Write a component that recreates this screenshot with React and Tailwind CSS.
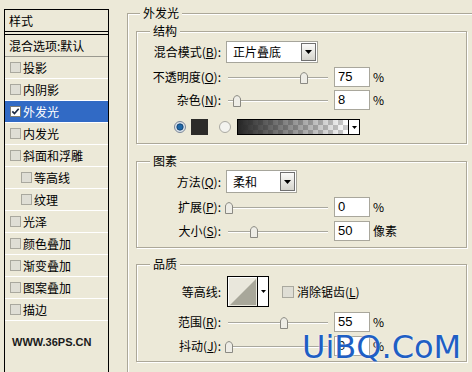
import React from 'react';

// 图层样式面板（左侧列表）
const layerStyles = [
  { name: '投影' },
  { name: '内阴影' },
  { name: '外发光', checked: true, active: true },
  { name: '内发光' },
  { name: '斜面和浮雕' },
  { name: '等高线', sub: true },
  { name: '纹理', sub: true },
  { name: '光泽' },
  { name: '颜色叠加' },
  { name: '渐变叠加' },
  { name: '图案叠加' },
  { name: '描边' },
];

function Box({ checked, size = 'w-[11px] h-[11px]' }) {
  return (
    <span
      className={`${size} shrink-0 border flex items-center justify-center ${
        checked ? 'border-[#7d7c75] bg-white' : 'border-[#a9a89e] bg-[#dfded5]'
      }`}
    >
      {checked && (
        <svg width="9" height="9" viewBox="0 0 9 9">
          <path d="M1.3 4.3L3.5 6.6L7.7 1.8" stroke="#1d2a44" strokeWidth="1.7" fill="none" />
        </svg>
      )}
    </span>
  );
}

function Tri({ w = 7, h = 4 }) {
  return (
    <svg width={w} height={h} viewBox={`0 0 ${w} ${h}`}>
      <path d={`M0 0H${w}L${w / 2} ${h}Z`} fill="#000" />
    </svg>
  );
}

function Select({ value, width }) {
  return (
    <div className={`${width} ml-[5px] bg-white border border-[#a6a59b] flex items-center shrink-0`}>
      <span className="pl-[6px]">{value}</span>
      <span className="ml-auto mr-[1px] w-[15px] h-[calc(100%-2px)] border border-[#707070] bg-[linear-gradient(#fbfbfa,#d5d4cc)] flex items-center justify-center">
        <Tri />
      </span>
    </div>
  );
}

function Slider({ pos }) {
  return (
    <div className="relative ml-[5px] w-[104px] h-[20px] shrink-0">
      <div className="absolute left-[2px] right-[2px] top-[10px] h-[2px] border-t border-t-[#a9a89e] border-b border-b-white" />
      <svg className="absolute top-[5px]" style={{ left: pos - 1 }} width="8" height="12" viewBox="0 0 8 12">
        <path d="M0.5 11.5V4Q0.5 2.4 2.2 1.3L4 0.5L5.8 1.3Q7.5 2.4 7.5 4V11.5Z" fill="#eeede6" stroke="#8a8982" />
      </svg>
    </div>
  );
}

function Field({ value, unit }) {
  return (
    <>
      <div className="ml-[4px] w-[36px] h-[20px] bg-white border border-[#a9a79c] pl-[3px] flex items-center text-[13px] font-['Liberation_Sans',sans-serif]">
        {value}
      </div>
      <span className="ml-[3px]">{unit}</span>
    </>
  );
}

function Label({ children }) {
  return <div className="w-[84px] shrink-0 text-right whitespace-nowrap">{children}</div>;
}

function SliderRow({ label, pos, value, unit = '%', cls }) {
  return (
    <div className={`flex items-center h-[20px] ${cls}`}>
      <Label>{label}</Label>
      <Slider pos={pos} />
      <Field value={value} unit={unit} />
    </div>
  );
}

function Radio({ on }) {
  return (
    <svg width="12" height="12" viewBox="0 0 12 12" className="shrink-0">
      <circle cx="6" cy="6" r="5.5" fill={on ? '#dde4ec' : '#f3f3ef'} stroke={on ? '#7b8796' : '#aaa9a2'} />
      {on && <circle cx="6" cy="6" r="3.2" fill="#1f67a6" stroke="#0d3a66" strokeWidth="0.8" />}
    </svg>
  );
}

function Group({ title, cls, children }) {
  return (
    <fieldset className={`w-[331px] border border-[#aca899] shadow-[inset_1px_1px_0_#fff,1px_1px_0_#fff] ${cls}`}>
      <legend className="ml-[13px] px-[3px] leading-[14px] bg-[#ece9d8]">{title}</legend>
      {children}
    </fieldset>
  );
}

export default function App() {
  return (
    <div className="relative w-[472px] h-[372px] overflow-hidden bg-[#ece9d8] text-black text-[12px] leading-[14px] font-['Noto_Sans_CJK_SC','Noto_Sans',sans-serif] flex items-start">
      {/* 左侧样式列表 */}
      <div className="ml-[4px] mt-[9px] w-[105px] h-[400px] shrink-0 border-l border-t border-r border-black">
        <div className="h-[22px] flex items-center pl-[4px] border-b border-black">样式</div>
        <div className="mt-[2px] border-t border-black">
          <div className="h-[22px] flex items-center pl-[4px] border-b border-[#9a998f]">混合选项:默认</div>
          {layerStyles.map(s => (
            <div
              key={s.name}
              className={`h-[22px] flex items-center gap-[2px] border-b border-white ${s.sub ? 'pl-[16px]' : 'pl-[5px]'} ${
                s.active ? 'bg-[#316ac5] text-white' : ''
              }`}
            >
              <Box checked={s.checked} />
              <span>{s.name}</span>
            </div>
          ))}
          <div className="mt-[15px] pl-[7px] text-[11px] leading-[13px] font-bold text-[#1a1a1a] font-['Liberation_Sans',sans-serif]">
            WWW.36PS.CN
          </div>
        </div>
      </div>

      {/* 外发光 */}
      <fieldset className="ml-[18px] mt-[6px] w-[360px] h-[420px] shrink-0 border border-[#aca899] shadow-[inset_1px_1px_0_#fff,1px_1px_0_#fff]">
        <legend className="ml-[12px] px-[3px] leading-[14px] bg-[#ece9d8]">外发光</legend>
        <div className="pt-[4px] pl-[8px]">
          <Group title="结构" cls="pb-[8px]">
            <div className="mt-[3px] h-[22px] flex items-center">
              <Label>
                混合模式(<u>B</u>):
              </Label>
              <Select value="正片叠底" width="w-[92px] h-[22px]" />
            </div>
            <SliderRow
              cls="mt-[4px]"
              label={<>不透明度(<u>O</u>):</>}
              pos={75}
              value="75"
            />
            <SliderRow cls="mt-[3px]" label={<>杂色(<u>N</u>):</>} pos={8} value="8" />
            <div className="mt-[9px] h-[16px] flex items-center pl-[37px]">
              <Radio on />
              <div className="ml-[5px] w-[17px] h-[16px] bg-[#2c2b29]" />
              <div className="ml-[11px]">
                <Radio />
              </div>
              <div className="ml-[6px] w-[123px] h-[16px] border border-black flex bg-white">
                <svg width="110" height="14" className="shrink-0">
                  <defs>
                    <pattern id="chk" width="10" height="10" patternUnits="userSpaceOnUse">
                      <rect width="10" height="10" fill="#fff" />
                      <rect width="5" height="5" fill="#cdcdcd" />
                      <rect x="5" y="5" width="5" height="5" fill="#cdcdcd" />
                    </pattern>
                    <linearGradient id="glow">
                      <stop offset="0" stopColor="#262626" />
                      <stop offset="1" stopColor="#262626" stopOpacity="0" />
                    </linearGradient>
                  </defs>
                  <rect width="110" height="14" fill="url(#chk)" />
                  <rect width="110" height="14" fill="url(#glow)" />
                </svg>
                <div className="flex-1 border-l border-black flex items-center justify-center">
                  <Tri w={5} h={3} />
                </div>
              </div>
            </div>
          </Group>

          <Group title="图素" cls="mt-[10px] pb-[6px]">
            <div className="mt-[2px] h-[23px] flex items-center">
              <Label>
                方法(<u>Q</u>):
              </Label>
              <Select value="柔和" width="w-[71px] h-[23px]" />
            </div>
            <SliderRow cls="mt-[4px]" label={<>扩展(<u>P</u>):</>} pos={0} value="0" />
            <SliderRow cls="mt-[4px]" label={<>大小(<u>S</u>):</>} pos={25} value="50" unit="像素" />
          </Group>

          <Group title="品质" cls="mt-[9px] pb-[5px]">
            <div className="mt-[5px] h-[31px] flex items-center">
              <Label>等高线:</Label>
              <div className="ml-[6px] w-[42px] h-[31px] border border-black flex shrink-0">
                <svg width="29" height="29" className="shrink-0">
                  <rect width="29" height="29" fill="#e9e7dc" />
                  <path d="M0.5 29V0.5H29" stroke="#fff" fill="none" />
                  <path d="M2 28L28 2V28Z" fill="#a8a79a" />
                </svg>
                <div className="flex-1 border-l border-black bg-white flex items-center justify-center">
                  <Tri w={5} h={3} />
                </div>
              </div>
              <div className="ml-[13px]">
                <Box size="w-[12px] h-[12px]" />
              </div>
              <span className="ml-[3px]">
                消除锯齿(<u>L</u>)
              </span>
            </div>
            <SliderRow cls="mt-[5px]" label={<>范围(<u>R</u>):</>} pos={55} value="55" />
            <SliderRow cls="mt-[4px]" label={<>抖动(<u>J</u>):</>} pos={0} value="0" />
          </Group>
        </div>
      </fieldset>

      <div className="absolute left-[302px] top-[331px] text-[32px] leading-[32px] font-['DejaVu_Sans',sans-serif] text-[#1f5fc4] [text-shadow:0_0_2px_#fff]">
        UiBQ.CoM
      </div>
    </div>
  );
}
